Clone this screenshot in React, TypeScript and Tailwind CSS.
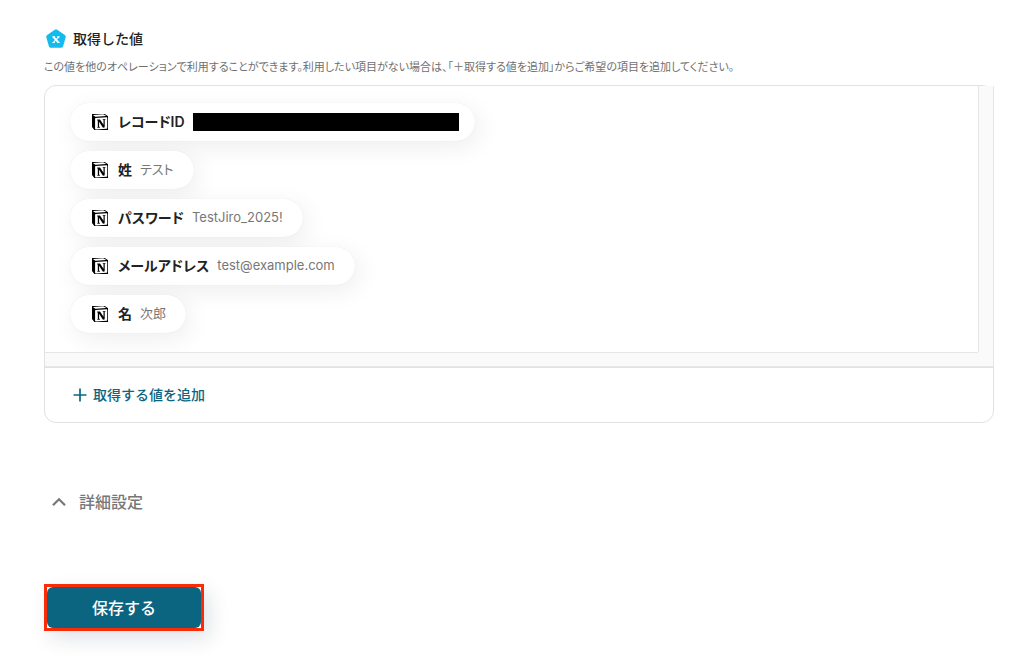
import { SiNotion } from 'react-icons/si'

const VALUES = [
  { label: 'レコードID', value: '', masked: true },
  { label: '姓', value: 'テスト' },
  { label: 'パスワード', value: 'TestJiro_2025!' },
  { label: 'メールアドレス', value: 'test@example.com' },
  { label: '名', value: '次郎' },
]

function PentagonIcon() {
  return (
    <svg className="h-5 w-5 shrink-0" viewBox="0 0 20 20" aria-hidden="true">
      <path
        d="M10 2.6 L17.5 7.9 L15 16.6 L5 16.6 L2.5 7.9 Z"
        fill="#14bbec"
        stroke="#14bbec"
        strokeWidth="4.4"
        strokeLinejoin="round"
      />
      <path d="M7.4 7.8 L12.6 13.6" stroke="#fff" strokeWidth="2" fill="none" />
      <path
        d="M12.8 7.8 L7.2 13.6 M6.4 7.9 H9 M11.2 7.9 H13.6 M6.4 13.5 H8.8 M11 13.5 H13.6"
        stroke="#fff"
        strokeWidth="1.1"
        fill="none"
      />
    </svg>
  )
}

function NotionIcon() {
  return (
    <svg className="h-4 w-4 shrink-0 text-black" viewBox="1 1 22 22" aria-hidden="true">
      {/* shaded left side of the cube */}
      <path d="M1.8 2.6 L5 5.6 V21.6 L1.8 18.2 Z" fill="currentColor" />
      <SiNotion size={24} />
    </svg>
  )
}

function ValueChip({ label, value, masked }: { label: string; value: string; masked?: boolean }) {
  return (
    <li className="flex h-[38px] items-center rounded-full bg-white pr-5 pl-[22px] shadow-[0_0_1px_rgba(0,0,0,0.1),4px_6px_24px_rgba(0,0,0,0.07)]">
      <NotionIcon />
      <span className="ml-2.5 text-sm font-semibold text-[#222]">{label}</span>
      {masked ? (
        <span className="-mr-1 ml-2 h-[18px] w-[266px] bg-black" />
      ) : (
        <span className="ml-2 text-[13px] text-[#777]">{value}</span>
      )}
    </li>
  )
}

export default function App() {
  return (
    <main className="min-h-screen bg-white pt-[27px] pr-[38px] pb-9 pl-11 font-['Inter','Noto_Sans_CJK_JP',sans-serif]">
      {/* heading */}
      <h2 className="flex h-6 items-center gap-[7px] pl-0.5 text-sm font-medium text-[#222]">
        <PentagonIcon />
        取得した値
      </h2>
      <p className="mt-[7px] text-[11px] leading-[18px] text-[#707070] [font-feature-settings:'palt']">
        この値を他のオペレーションで利用することができます。利用したい項目がない場合は、「＋取得する値を追加」からご希望の項目を追加してください。
      </p>

      {/* values panel */}
      <section className="mt-[9px] rounded-xl border border-[#e2e2e2]">
        <div className="-mr-px grid grid-cols-[1fr_16px] grid-rows-[1fr_15px] border-b border-[#e2e2e2]">
          <ul className="flex flex-col items-start gap-2.5 overflow-hidden rounded-tl-xl px-[25px] pt-[17px] pb-[19px] [font-feature-settings:'palt']">
            {VALUES.map((item) => (
              <ValueChip key={item.label} {...item} />
            ))}
          </ul>
          <div className="border-x border-[#e6e6e6] bg-[#fafafa]" />
          <div className="border-y border-[#e6e6e6] bg-[#fafafa]" />
          <div className="border-r border-b border-[#e6e6e6] bg-[#fafafa]" />
        </div>
        <div className="flex h-[54px] items-center pl-7">
          <button type="button" className="flex items-center gap-1.5 text-sm font-medium text-[#0b6581]">
            <svg className="h-3.5 w-3.5" viewBox="0 0 14 14" aria-hidden="true">
              <path d="M7 0.5 V13.5 M0.5 7 H13.5" stroke="currentColor" strokeWidth="1.7" />
            </svg>
            取得する値を追加
          </button>
        </div>
      </section>

      <button type="button" className="mt-[67px] ml-2 flex h-6 items-center gap-[13px] text-base font-medium text-[#777]">
        <svg className="h-3.5 w-3.5" viewBox="0 0 14 14" aria-hidden="true">
          <path d="M1 10.3 L7 4.3 L13 10.3" fill="none" stroke="currentColor" strokeWidth="2.2" />
        </svg>
        詳細設定
      </button>

      {/* save */}
      <div className="mt-[70px] w-40 border-3 border-[#fa2c08] shadow-[6px_8px_20px_rgba(20,30,60,0.12)]">
        <button type="button" className="block h-[41px] w-full rounded-md bg-[#0b6581] text-base font-medium text-white">
          保存する
        </button>
      </div>
    </main>
  )
}
